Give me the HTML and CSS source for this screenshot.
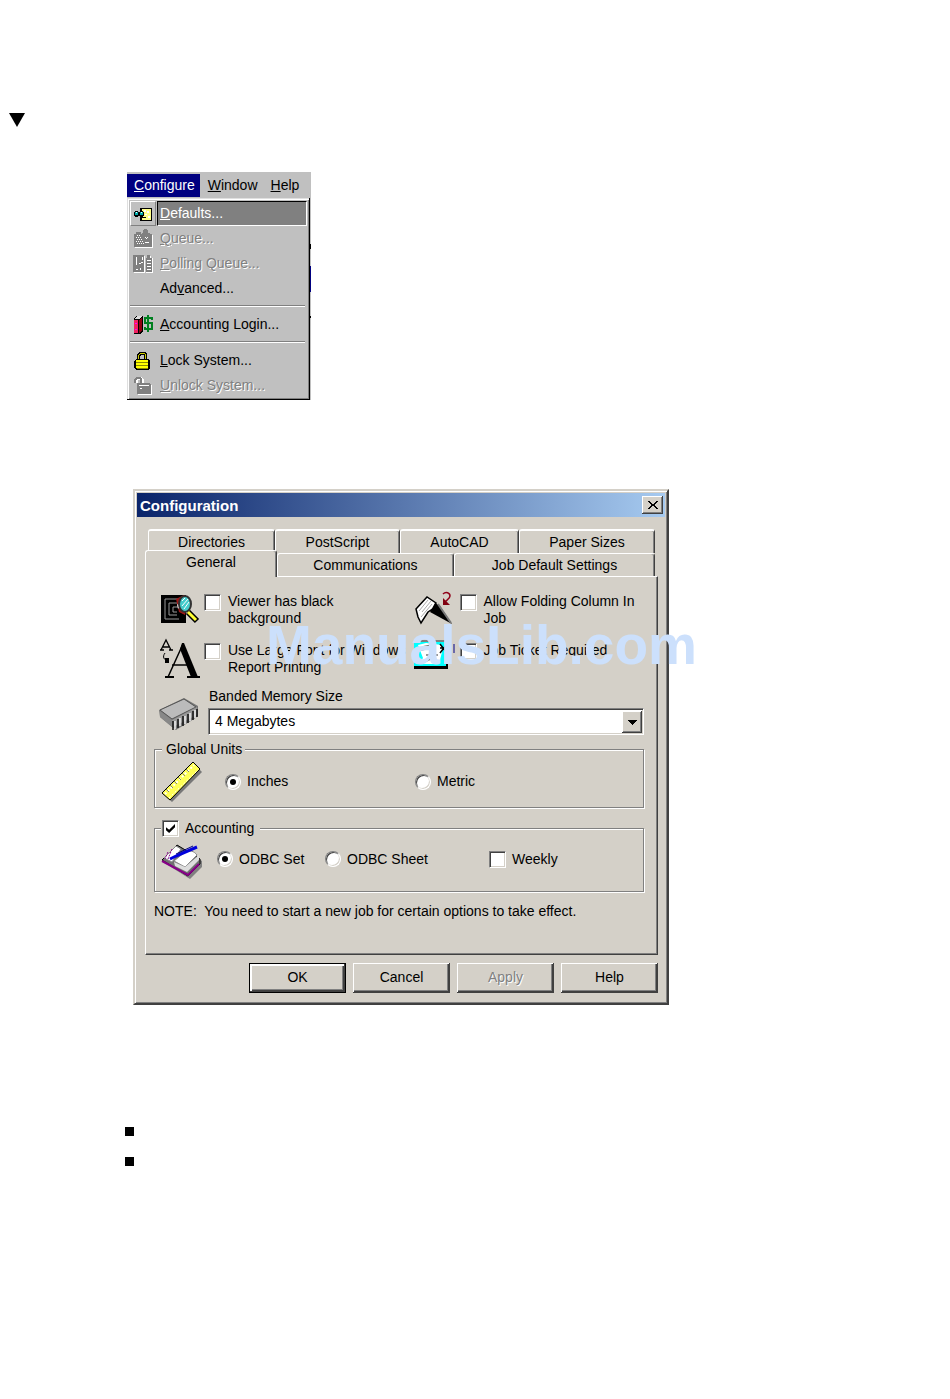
FILE: index.html
```html
<!DOCTYPE html>
<html lang="en">
<head>
<meta charset="utf-8">
<title>Configuration</title>
<link rel="stylesheet" href="styles.css">
</head>
<body>
<main class="page">
  <svg class="marker" viewBox="0 0 16 14" aria-hidden="true"><path d="M0 0H16L8 14Z"/></svg>

  <nav class="menu" aria-label="Application menu">
    <div class="menubar">
      <button class="menubar-item active" type="button"><u>C</u>onfigure</button>
      <button class="menubar-item" type="button"><u>W</u>indow</button>
      <button class="menubar-item" type="button"><u>H</u>elp</button>
    </div>
    <div class="dropdown">
      <button class="menu-item selected" type="button">
        <span class="menu-icon raised"><svg viewBox="0 0 20 16" shape-rendering="crispEdges">
          <path d="M7 2h12v13H7z" fill="#000"/><path d="M9 3h9v11H9z" fill="#ff8"/><path d="M11 4h2v2h-2zM14 5h2v2h-2zM12 8h2v1h-2zM15 10h2v2h-2z" fill="#fff"/>
          <path d="M2 5h3v1h2V5h3v1h1v4h-1v1H7v-1H5v1H2v-1H1V6h1z" fill="#000"/><path d="M2 6h3v3H2zM7 6h3v3H7z" fill="#0aa"/><path d="M3 6h1v1H3zM8 6h1v1H8z" fill="#fff"/><path d="M8 11h5v1H8z" fill="#000"/></svg></span>
        <span class="menu-text"><u>D</u>efaults...</span>
      </button>
      <button class="menu-item" type="button" disabled>
        <span class="menu-icon"><svg viewBox="0 0 20 20" shape-rendering="crispEdges">
          <path d="M2 6h18v13H2z" fill="#fff"/><path d="M1 5h2V3h5v2h1V4h1V1h1V0h3v1h1v3h2v1h2v13H1z" fill="#808080"/><path d="M4 6h1v1H4zM6 6h1v1H6zM3 8h1v1H3zM5 8h1v1H5zM7 8h1v1H7zM4 10h1v1H4zM6 10h1v1H6zM8 10h1v1H8zM3 12h1v1H3zM5 12h1v1H5zM7 12h1v1H7zM9 12h1v1H9zM4 14h1v1H4zM6 14h1v1H6zM8 14h1v1H8zM10 14h1v1h-1zM12 8h1v1h-1zM13 9h1v1h-1zM14 8h1v1h-1zM12 13h4v1h-4z" fill="#fff"/></svg></span>
        <span class="menu-text"><u>Q</u>ueue...</span>
      </button>
      <button class="menu-item" type="button" disabled>
        <span class="menu-icon"><svg viewBox="0 0 20 20" shape-rendering="crispEdges">
          <path d="M1 2h11v17H1zM13 4h2V2h3v2h2v15h-7z" fill="#fff"/><path d="M0 1h11v17H0zM13 4h1V1h3v3h2v14h-6z" fill="#808080"/><path d="M3 3h1v8H3zM6 9h2v1H6zM8 8h2v1H8zM3 15h2v1H3zM7 14h1v2H7zM9 3h1v3H9zM14 6h4v1h-4zM14 9h4v1h-4zM14 12h4v1h-4zM14 15h4v1h-4z" fill="#fff"/></svg></span>
        <span class="menu-text"><u>P</u>olling Queue...</span>
      </button>
      <button class="menu-item" type="button">
        <span class="menu-icon"></span>
        <span class="menu-text">Ad<u>v</u>anced...</span>
      </button>
      <hr class="menu-rule">
      <button class="menu-item" type="button">
        <span class="menu-icon"><svg viewBox="0 0 20 20" shape-rendering="crispEdges">
          <path d="M0 4l4-3h6v15l-3 3H1V5z" fill="#000"/><path d="M1 5h4v13H1z" fill="#f02060"/><path d="M6 5l3-3v14l-3 2z" fill="#900010"/><path d="M2 3l3-2h4L6 4H2z" fill="#ddd"/><path d="M2 8h2v1H2zM2 14h2v1H2z" fill="#f0f"/>
          <path d="M19 5V3h-7v5h7v6h-7v-2M15 0v17" fill="none" stroke="#008020" stroke-width="2"/></svg></span>
        <span class="menu-text"><u>A</u>ccounting Login...</span>
      </button>
      <hr class="menu-rule">
      <button class="menu-item" type="button">
        <span class="menu-icon"><svg viewBox="0 0 20 20" shape-rendering="crispEdges">
          <path d="M4 9V3l2-2h6l2 2v6h-3V5l-1-1H8L7 5v4z" fill="#000"/><path d="M5 9V4l2-2h4l2 2v5h-1V4l-1-1H7L6 4v5z" fill="#cc0"/><path d="M3 8h13l1 2v7l-2 2H3l-2-2v-7z" fill="#000"/><path d="M3 9h12v8H3z" fill="#ff0"/><path d="M3 11h12v1H3zM3 14h12v1H3zM4 17h11v1H4z" fill="#880"/></svg></span>
        <span class="menu-text"><u>L</u>ock System...</span>
      </button>
      <button class="menu-item" type="button" disabled>
        <span class="menu-icon"><svg viewBox="0 0 20 20" shape-rendering="crispEdges">
          <path d="M2 7V3l2-2h4l3 3v4H9V5L7 4H5v4z" fill="#fff"/><path d="M1 6V3l2-2h4l2 2v5H7V4L6 3H4L3 4v3H1z" fill="#808080"/><path d="M4 8h14l1 2v8l-1 1H5z" fill="#fff"/><path d="M4 7h13l1 2v8l-1 1H4z" fill="#808080"/><path d="M6 9h10v1H6zM7 12h2v1H7z" fill="#fff"/></svg></span>
        <span class="menu-text"><u>U</u>nlock System...</span>
      </button>
    </div>
  </nav>

  <section class="dialog" role="dialog" aria-labelledby="dialog-title">
    <header class="titlebar">
      <h1 class="title" id="dialog-title">Configuration</h1>
      <button class="close" type="button" aria-label="Close"><svg viewBox="0 0 10 8" shape-rendering="crispEdges"><path d="M0 0h2v1h1v1h1v1h2V2h1V1h1V0h2v1H9v1H8v1H7v2h1v1h1v1h1v1H8V7H7V6H6V5H4v1H3v1H2v1H0V7h1V6h1V5h1V3H2V2H1V1H0z"/></svg></button>
    </header>

    <form class="body">
      <div class="tabs" role="tablist">
        <div class="tab-row back">
          <button class="tab" role="tab" type="button">Directories</button>
          <button class="tab" role="tab" type="button">PostScript</button>
          <button class="tab" role="tab" type="button">AutoCAD</button>
          <button class="tab" role="tab" type="button">Paper Sizes</button>
        </div>
        <div class="tab-row front">
          <button class="tab current" role="tab" type="button" aria-selected="true">General</button>
          <button class="tab" role="tab" type="button">Communications</button>
          <button class="tab" role="tab" type="button">Job Default Settings</button>
        </div>
      </div>

      <div class="panel" role="tabpanel">
        <div class="options">
          <div class="option">
            <svg class="icon" viewBox="0 0 42 42">
              <path d="M1 5h25v28H1z"/><path d="M20 9H5v20h14M19 13H9v12h8M18 17h-5v5h4" fill="none" stroke="#999" stroke-width="1"/>
              <path d="M16 9l8-4 4 3-3 17-6-3z" fill="#a01818"/><path d="M17 14l3 2-2 3z" fill="#fff"/>
              <ellipse cx="25" cy="14" rx="6" ry="8" fill="#4cc" stroke="#333" stroke-width="2"/><path d="M22 11l3-3M22 16l6-7M24 19l5-7" stroke="#fff" stroke-width="1"/>
              <path d="M28 22l9 9" stroke="#000" stroke-width="6"/><path d="M28 22l8 8" stroke="#ff3" stroke-width="3"/></svg>
            <input class="check" type="checkbox" id="viewer">
            <label for="viewer">Viewer has black<br>background</label>
          </div>
          <div class="option">
            <svg class="icon" viewBox="3 0 42 42">
              <path d="M3 19L14 7l9 6-2 5-6 4-7 11-3-6z" fill="#fff" stroke="#000" stroke-width="1.5"/>
              <path d="M6 21l9-11M9 22l9-11M8 27l11-13" stroke="#aaa" stroke-width="1"/>
              <path d="M22 13l5 3 12 18-22-12z" fill="#000"/><path d="M25 14l13 19" stroke="#777" stroke-width="2"/>
              <path d="M30 4c3-3 7-1 7 2s-4 4-6 7" fill="none" stroke="#900018" stroke-width="1.5"/><path d="M30 8v7h7z" fill="#800010"/></svg>
            <input class="check" type="checkbox" id="folding">
            <label for="folding">Allow Folding Column In<br>Job</label>
          </div>
          <div class="option">
            <svg class="icon" viewBox="0 0 42 42">
              <path d="M1 11L6 1l5 10M3 8h6M0 11h4M9 11h4" fill="none" stroke="#000" stroke-width="1.3"/><path d="M5 14c-3 4-1 7 3 8" fill="none" stroke="#000"/><path d="M5 19h4v5H5z"/>
              <path d="M8 38L23 5M12 26h18" fill="none" stroke="#000" stroke-width="1.5"/><path d="M22 4h2l14 34h-7L20 10z"/><path d="M5 37h9v2H5zM27 37h13v2H27z"/></svg>
            <input class="check" type="checkbox" id="large-font">
            <label for="large-font">Use Large Font for Windows<br>Report Printing</label>
          </div>
          <div class="option">
            <svg class="icon" viewBox="2 0 42 42">
              <path d="M0 2h34v28H0z"/><path d="M0 1h33v2H0z" fill="#808080"/><path d="M0 3h32v24H0z" fill="#0ff"/><path d="M4 6l8-2 16 2v7l-3 12H5l4-6z" fill="#fff"/><path d="M8 8l10-2M7 11l10-2M12 16h12M10 23l11-5" stroke="#777" stroke-width="1.5"/>
              <path d="M26 5l7 9M33 5l-7 9M26 9h7" stroke="#000" stroke-width="1.5"/><path d="M40 5v9" stroke="#008" stroke-width="1"/></svg>
            <input class="check" type="checkbox" id="ticket">
            <label for="ticket">Job Ticket Required</label>
          </div>
        </div>

        <div class="memory">
          <svg class="icon" viewBox="0 0 42 36">
            <path d="M0 13L25 1l14 8v10l-4 3-18 11-5-4-11-9z" fill="#777"/><path d="M1 13L25 2l12 8-24 12z" fill="#bbb" stroke="#555"/><path d="M1 14l12 9v7L1 20z" fill="#888"/><path d="M13 23l25-13v8L14 30z" fill="#999"/>
            <path d="M14 24v9M19 22v9M24 19v10M29 17v9M34 14v9M38 12v8" stroke="#111" stroke-width="1.5"/><path d="M16 24v8M21 21v8M26 19v8M31 16v8M36 13v8" stroke="#eee" stroke-width="1.5"/></svg>
          <div class="field">
            <label for="memory">Banded Memory Size</label>
            <div class="combo">
              <select id="memory"><option>4 Megabytes</option></select>
              <span class="arrow"><svg viewBox="0 0 9 5" shape-rendering="crispEdges"><path d="M0 0h9v1H8v1H7v1H6v1H5v1H4V4H3V3H2V2H1V1H0z"/></svg></span>
            </div>
          </div>
        </div>

        <fieldset class="group units">
          <legend>Global Units</legend>
          <svg class="icon" viewBox="0 0 42 42">
            <path d="M2 33L33 3l8 8L11 41z" fill="#777"/><path d="M1 32L32 1l7 7L9 39z" fill="#ff5" stroke="#000" stroke-width="1"/><path d="M4 33L33 4" stroke="#fff" stroke-width="2" stroke-dasharray="2 2"/><path d="M5 28l3 3M9 24l3 3M13 20l3 3M17 16l3 3M21 12l3 3M25 8l3 3" stroke="#886" stroke-width="1"/><path d="M8 37L37 9" stroke="#fff" stroke-dasharray="2 2"/></svg>
          <span class="choice"><input class="radio" type="radio" name="units" id="inches" checked><label for="inches">Inches</label></span>
          <span class="choice"><input class="radio" type="radio" name="units" id="metric"><label for="metric">Metric</label></span>
        </fieldset>

        <fieldset class="group accounting">
          <legend><input class="check" type="checkbox" id="accounting" checked><label for="accounting">Accounting</label></legend>
          <svg class="icon" viewBox="0 0 42 36">
            <path d="M2 18L17 2l24 15v6L29 35z" fill="#808080"/><path d="M1 16L16 1l5 3 18 11v5L27 32z" fill="#707070" stroke="#000"/><path d="M1 17l26 14 11-11" fill="none" stroke="#808" stroke-width="2"/><path d="M3 14L15 2l5 3-9 13zM13 17l11-9c5-2 9-1 12 3L24 23z" fill="#fff" stroke="#888"/><path d="M13 18l11 5 14-12v5L26 28l-12-6z" fill="#ddd"/><path d="M7 8l-3 7M11 5L7 15" stroke="#808" stroke-width="1" stroke-dasharray="2 1"/>
            <path d="M9 15l6-3L36 3" fill="none" stroke="#00d" stroke-width="3"/><path d="M15 10L32 2" stroke="#000080" stroke-width="1"/></svg>
          <span class="choice"><input class="radio" type="radio" name="odbc" id="set" checked><label for="set">ODBC Set</label></span>
          <span class="choice"><input class="radio" type="radio" name="odbc" id="sheet"><label for="sheet">ODBC Sheet</label></span>
          <span class="choice"><input class="check" type="checkbox" id="weekly"><label for="weekly">Weekly</label></span>
        </fieldset>

        <p class="note">NOTE:&nbsp; You need to start a new job for certain options to take effect.</p>
      </div>

      <div class="actions">
        <button class="action default" type="button">OK</button>
        <button class="action" type="button">Cancel</button>
        <button class="action" type="button" disabled>Apply</button>
        <button class="action" type="button">Help</button>
      </div>
    </form>
    <div class="watermark">ManualsLib.com</div>
  </section>

  <ul class="bullets">
    <li></li>
    <li></li>
  </ul>
</main>
</body>
</html>
```
FILE: styles.css
```css
* { box-sizing: border-box; }

body {
  margin: 0;
  background: #fff;
  color: #000;
  font: 14px/17px "Liberation Sans", Arial, sans-serif;
}

button, select {
  font: inherit;
  color: inherit;
  margin: 0;
  padding: 0;
  border: 0;
  border-radius: 0;
  background: none;
}

svg { display: block; overflow: visible; }

.page { padding: 113px 9px 80px; }
.marker { width: 16px; height: 14px; }

/* Menu */
.menu {
  position: relative;
  width: 184px;
  margin: 45px 0 0 118px;
  background: #c0c0c0;
}
.menu::after {
  content: "";
  position: absolute;
  right: 0;
  top: 26px;
  bottom: 82px;
  width: 1px;
  background: linear-gradient(#c0c0c0 46px, #000 46px 51px, #c0c0c0 51px 68px, #000080 68px 94px, #c0c0c0 94px 118px, #000 118px);
}
.menubar { display: flex; gap: 1px; height: 26px; padding: 2px 0 1px; }
.menubar-item { padding: 0 5px 0 7px; }
.menubar-item.active { background: #000080; color: #fff; }

.dropdown {
  margin-right: 1px;
  padding: 3px 2px 1px 1px;
  border: 1px solid #000;
  border-width: 0 1px 1px 0;
  box-shadow: inset 1px 1px #dfdfdf, inset 2px 2px #fff, inset -1px -1px #808080;
}
.menu-item {
  display: flex;
  align-items: stretch;
  width: 100%;
  height: 25px;
  padding-left: 2px;
  text-align: left;
}
.menu-icon {
  display: flex;
  align-items: center;
  justify-content: center;
  width: 26px;
  margin-right: 1px;
}
.menu-icon svg { width: 20px; height: 20px; }
.menu-icon.raised {
  border: 1px solid;
  border-color: #fff #808080 #808080 #fff;
}
.menu-icon.raised svg { height: 16px; }
.menu-text { flex: 1; padding: 3px 2px; border: 1px solid transparent; }
.selected .menu-text {
  background: #808080;
  color: #fff;
  border-color: #000 #fff #fff #000;
}
.menu-item:disabled, .action:disabled { color: #808080; text-shadow: 1px 1px #fff; }
.menu-rule {
  height: 2px;
  margin: 4px 2px 5px;
  border: 0;
  border-top: 1px solid #808080;
  border-bottom: 1px solid #fff;
}

/* Dialog */
.dialog {
  position: relative;
  max-width: 536px;
  margin: 89px 0 0 124px;
  padding: 2px;
  background: #d4d0c8;
  border: 2px solid;
  border-color: #d4d0c8 #404040 #404040 #d4d0c8;
  box-shadow: inset 1px 1px #fff, inset -1px -1px #808080;
}
.titlebar {
  display: flex;
  align-items: center;
  justify-content: space-between;
  height: 24px;
  padding: 0 2px 0 3px;
  background: linear-gradient(to right, #0a246a, #a6caf0);
}
.title { margin: 0; font-size: 15px; color: #fff; }
.close {
  display: flex;
  align-items: center;
  justify-content: center;
  width: 21px;
  height: 18px;
  background: #d4d0c8;
  box-shadow: inset -1px -1px #404040, inset 1px 1px #fff, inset -2px -2px #808080;
}
.close svg { width: 10px; height: 8px; }

.body { padding: 12px 7px 8px 8px; }

.tab-row { display: grid; margin-right: 3px; }
.tab-row.back { grid-template-columns: 127fr 125fr 119fr 136fr; margin-left: 3px; }
.tab-row.front { grid-template-columns: 132fr 177fr 201fr; }
.tab {
  height: 24px;
  border: 1px solid;
  border-width: 2px 1px 0 1px;
  border-color: #fff #404040 #fff #fff;
  border-radius: 3px 3px 0 0;
  box-shadow: inset -1px 0 #808080;
}
.front .tab { height: 23px; border-top-width: 1px; }
.front .current {
  position: relative;
  height: 27px;
  margin: -3px 0 -1px;
  padding-bottom: 4px;
  background: #d4d0c8;
}

.panel {
  padding: 16px 13px 34px 8px;
  border: 1px solid;
  border-color: #fff #404040 #404040 #fff;
  box-shadow: inset -1px -1px #808080;
}
.icon { flex: none; width: 42px; height: 42px; }
.check, .radio {
  appearance: none;
  flex: none;
  display: grid;
  place-items: center;
  width: 17px;
  height: 17px;
  margin: 0;
  background: #fff;
  border: 1px solid;
  border-color: #808080 #fff #fff #808080;
  box-shadow: inset 1px 1px #404040, inset -1px -1px #d4d0c8;
}
.check:checked::before {
  content: "";
  width: 9px;
  height: 9px;
  background: #000;
  clip-path: polygon(0 35%, 35% 65%, 100% 0, 100% 35%, 35% 100%, 0 70%);
}
.radio { width: 16px; height: 16px; border-radius: 50%; }
.radio:checked::before {
  content: "";
  width: 6px;
  height: 6px;
  border-radius: 50%;
  background: #000;
}

.options {
  display: grid;
  grid-template-columns: 255fr 228fr;
  grid-auto-rows: 49px;
  padding-left: 6px;
}
.option { display: flex; align-items: flex-start; }
.option .icon { margin: -3px 2px 0 0; }
.option .check { margin: 1px 7px 0 0; }

.memory { display: flex; padding-left: 5px; }
.memory .icon { height: 36px; margin-top: 6px; }
.field { flex: 1; margin-left: 7px; }
.field label { display: block; margin: -3px 0 3px 1px; }
.combo { position: relative; }
.combo select {
  appearance: none;
  display: block;
  width: 100%;
  height: 27px;
  padding: 0 24px 0 6px;
  background: #fff;
  border: 1px solid;
  border-color: #808080 #fff #fff #808080;
  box-shadow: inset 1px 1px #404040, inset -1px -1px #d4d0c8;
}
.arrow {
  position: absolute;
  top: 3px;
  right: 2px;
  display: flex;
  align-items: center;
  justify-content: center;
  width: 20px;
  height: 22px;
  background: #d4d0c8;
  box-shadow: inset -1px -1px #404040, inset 1px 1px #fff, inset -2px -2px #808080;
  pointer-events: none;
}
.arrow svg { width: 9px; height: 5px; }

.group {
  display: flex;
  align-items: center;
  min-width: 0;
  margin: 0;
  padding: 0 6px;
  border: 1px solid #808080;
  box-shadow: inset 1px 1px #fff, 1px 1px #fff;
}
.group legend {
  display: flex;
  align-items: center;
  padding: 0 3px 0 4px;
  background: #d4d0c8;
}
.choice { display: flex; align-items: center; gap: 6px; }
.units { height: 67px; margin-top: 6px; padding-bottom: 2px; }
.units legend { margin-left: 1px; }
.units .choice:nth-of-type(1) { width: 190px; margin-left: 22px; }
.accounting { height: 72px; margin-top: 12px; padding-bottom: 4px; }
.accounting .icon { height: 36px; }
.accounting legend { gap: 6px; padding: 0 6px 0 1px; }
.accounting .choice { margin-bottom: 6px; }
.accounting .choice:nth-of-type(1) { width: 108px; margin-left: 14px; }
.accounting .choice:nth-of-type(2) { width: 164px; }

.note { margin: 11px 0 0; }

.actions { display: flex; justify-content: flex-end; gap: 7px; margin-top: 8px; }
.action {
  width: 97px;
  height: 30px;
  padding-bottom: 2px;
  box-shadow: inset -1px -1px #404040, inset 1px 1px #fff, inset -2px -2px #404040, inset -3px -3px #808080;
}
.action.default {
  border: 1px solid #000;
  box-shadow: inset -1px -1px #404040, inset 2px 2px #fff, inset -2px -2px #404040, inset -3px -3px #808080;
}

.watermark {
  position: absolute;
  left: 131px;
  top: 122px;
  font-size: 55px;
  line-height: 64px;
  font-weight: bold;
  color: #cce0fc;
  white-space: nowrap;
  pointer-events: none;
}

/* List markers */
.bullets {
  display: grid;
  gap: 21px;
  margin: 122px 0 0 116px;
  padding: 0;
  list-style: none;
}
.bullets li { width: 9px; height: 9px; background: #000; }
```
